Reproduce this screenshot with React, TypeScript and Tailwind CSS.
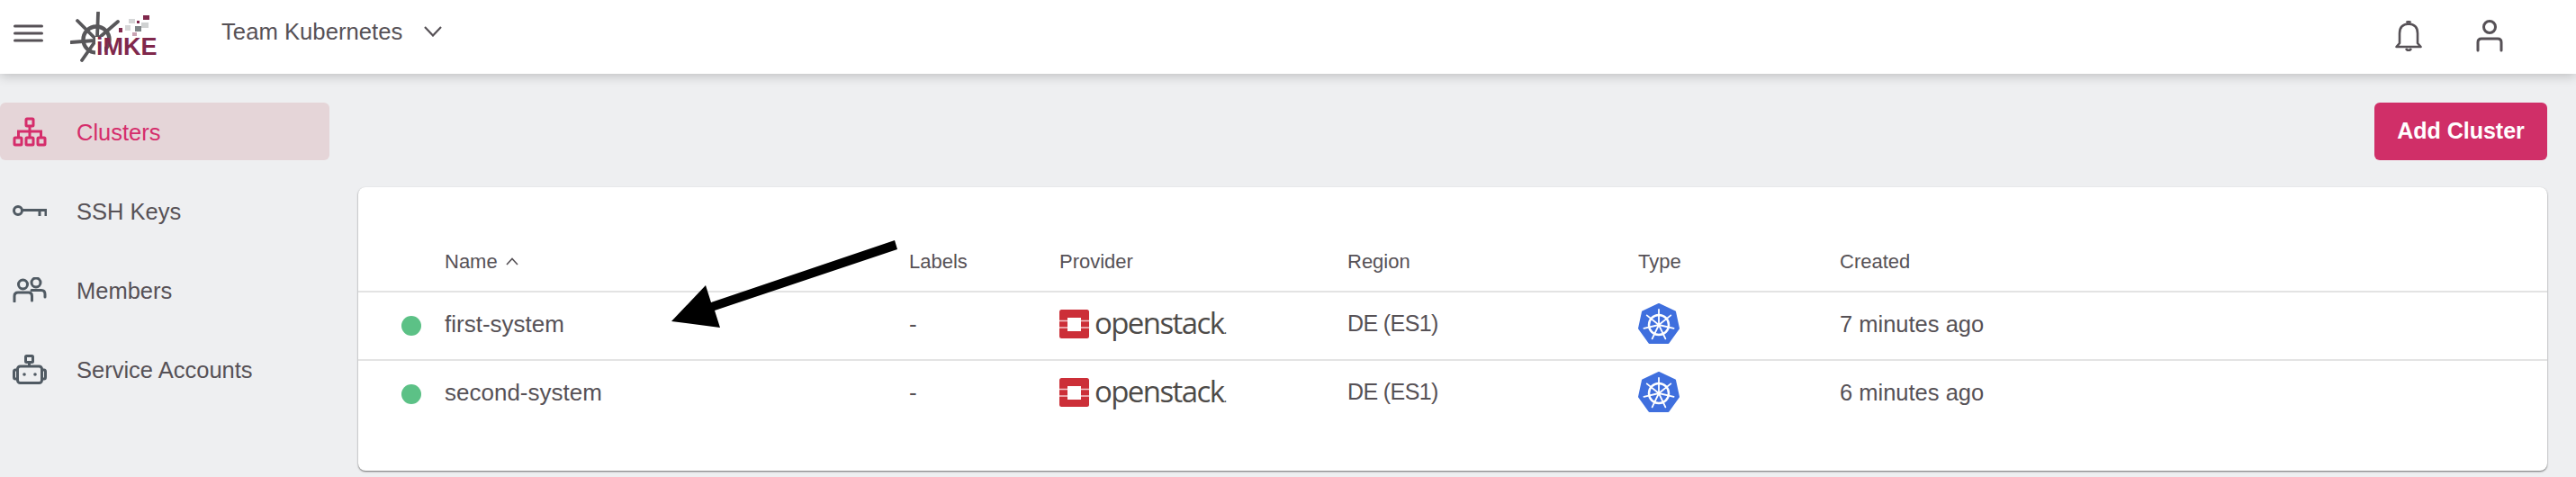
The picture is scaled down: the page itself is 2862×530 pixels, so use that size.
const rowGrid = "grid grid-cols-[96px_516px_167px_320px_323px_224px_1fr] items-center";

function Logo() {
    return (
        <div className="relative h-[56px] w-[96px] shrink-0">
            <svg width="96" height="56" viewBox="78 9 96 56" fill="none">
                <g stroke="#58575a" strokeLinecap="round">
                    <circle cx="107" cy="40" r="14.5" strokeWidth="4.4" />
                    <path d="M109 10 L108 38 M79 43 L105 41 M86 19 L105 38 M131 20 L110 38 M91 63 L105 43" strokeWidth="3.8" />
                </g>
                <rect x="106" y="37" width="10" height="23" fill="#fff" />
                <g>
                    <rect x="159" y="13" width="7" height="5" fill="#80284c" />
                    <rect x="143" y="17" width="7" height="5" fill="#d5d6d7" />
                    <rect x="152" y="19" width="3" height="3" fill="#80284c" />
                    <rect x="157" y="21" width="8" height="6" fill="#d0d2d2" />
                    <rect x="139" y="24" width="6" height="6" fill="#d5d6d7" />
                    <rect x="150" y="25" width="7" height="6" fill="#7f8587" />
                    <rect x="132" y="27" width="4" height="5" fill="#80284c" />
                    <rect x="147" y="32" width="5" height="4" fill="#c9a4b3" />
                </g>
            </svg>
            <span className="absolute left-[29px] top-[25px] text-[27px] font-bold leading-[28px] text-[#80284c]">iMKE</span>
        </div>
    );
}

function ClustersIcon() {
    return (
        <svg width="38" height="33" viewBox="0 0 38 33" fill="none" stroke="#d52d6b" strokeWidth="3">
            <rect x="15" y="2" width="8" height="8" rx="1" />
            <path d="M19 10 V22 M6.5 22 V16 H31.5 V22" />
            <rect x="2" y="23" width="8" height="8" rx="1" />
            <rect x="15" y="23" width="8" height="8" rx="1" />
            <rect x="28" y="23" width="8" height="8" rx="1" />
        </svg>
    );
}

function KeyIcon() {
    return (
        <svg width="38" height="14" viewBox="0 0 38 14" fill="none" stroke="#505a63" strokeWidth="3">
            <circle cx="6" cy="7" r="4.5" />
            <path d="M11 6.5 H37 V13 M30 6.5 V13" />
        </svg>
    );
}

function MembersIcon() {
    return (
        <svg width="38" height="28" viewBox="0 0 38 28" fill="none" stroke="#505a63" strokeWidth="3" strokeLinecap="round">
            <circle cx="11.5" cy="8" r="5" />
            <circle cx="26" cy="6" r="5" />
            <path d="M2 27 V21 Q2 17 6 17 H18 Q21.5 17 21.5 21 V26" />
            <path d="M21 14.5 H32 Q36 14.5 36 19 V22" />
        </svg>
    );
}

function RobotIcon() {
    return (
        <svg width="38" height="33" viewBox="0 0 38 33" fill="none" stroke="#505a63" strokeWidth="3">
            <rect x="14.5" y="1.5" width="8" height="7" rx="1" />
            <path d="M18.5 8.5 V13" />
            <rect x="5.5" y="13" width="27" height="18.5" rx="3" />
            <path d="M5.5 17 H3 Q1.5 17 1.5 19 V25 Q1.5 27 3 27 H5.5 M32.5 17 H35 Q36.5 17 36.5 19 V25 Q36.5 27 35 27 H32.5" />
            <circle cx="13" cy="22" r="1.8" fill="#505a63" stroke="none" />
            <circle cx="25" cy="22" r="1.8" fill="#505a63" stroke="none" />
        </svg>
    );
}

function OpenstackLogo() {
    return (
        <div className="flex items-center">
            <svg width="33" height="32" viewBox="0 0 33 32" className="shrink-0">
                <rect width="33" height="32" rx="2.5" fill="#cc2f38" />
                <rect x="9" y="9" width="15" height="15" fill="#fff" />
                <path d="M0 12.5 H9 M0 20 H9 M24 12.5 H33 M24 20 H33" stroke="#f3c9cc" strokeWidth="1.6" />
            </svg>
            <span className="ml-[6px] pb-[3px] font-['Open_Sans',sans-serif] text-[33px] font-medium leading-none tracking-[-1.6px] text-[#4d4a48]">
                openstack<span className="text-[14px]">.</span>
            </span>
        </div>
    );
}

function KubernetesIcon() {
    const spokes = [0, 1, 2, 3, 4, 5, 6].map((i) => (i * 360) / 7);
    return (
        <svg width="46" height="46" viewBox="0 0 46 46" className="shrink-0">
            <path fill="#3f6fde" stroke="#3f6fde" strokeWidth="2" strokeLinejoin="round" d="M23 1 L41 9.5 L45 28 L33.5 44 H12.5 L1 28 L5 9.5 Z" />
            <g fill="none" stroke="#fff">
                <circle cx="23" cy="24" r="11" strokeWidth="2.5" />
                <circle cx="23" cy="24" r="2" fill="#fff" stroke="none" />
                {spokes.map((deg) => (
                    <line key={deg} x1="23" y1="24" x2="23" y2="7" strokeWidth="1.8" strokeLinecap="round" transform={`rotate(${deg} 23 24)`} />
                ))}
            </g>
        </svg>
    );
}

const navItems = [
    { name: "Clusters", icon: <ClustersIcon />, active: true },
    { name: "SSH Keys", icon: <KeyIcon />, active: false },
    { name: "Members", icon: <MembersIcon />, active: false },
    { name: "Service Accounts", icon: <RobotIcon />, active: false },
];

const clusters = [
    { name: "first-system", created: "7 minutes ago" },
    { name: "second-system", created: "6 minutes ago" },
];

export default function App() {
    return (
        <div className="relative h-[530px] w-[2862px] overflow-hidden bg-[#eeeff1] font-['Liberation_Sans',sans-serif] text-[#565156]">
            <header className="relative z-10 flex h-[82px] items-center bg-white pl-[15px] pr-[81px] shadow-[0_2px_12px_rgba(0,0,0,0.22)]">
                <svg width="33" height="20" viewBox="0 0 33 20" fill="none" stroke="#565156" strokeWidth="3" strokeLinecap="round" className="mb-[8px] shrink-0">
                    <path d="M1.5 2 H31.5 M1.5 10 H31.5 M1.5 18 H31.5" />
                </svg>
                <div className="ml-[30px]">
                    <Logo />
                </div>
                <span className="ml-[72px] pb-[12px] text-[25.7px]">Team Kubernetes</span>
                <svg width="20" height="12" viewBox="0 0 20 12" fill="none" stroke="#565156" strokeWidth="2.2" className="mb-[12px] ml-[24px] shrink-0">
                    <path d="M1 1 L10 10.5 L19 1" />
                </svg>
                <div className="ml-auto flex items-center gap-[60px] pb-[3px]">
                    <svg width="30" height="34" viewBox="0 0 30 34" fill="none" stroke="#565156" strokeWidth="2.6" strokeLinejoin="round">
                        <path d="M1.5 29 L5 25 V14 Q5 4 15 3.5 Q25 4 25 14 V25 L28.5 29 Z" />
                        <path d="M12.5 2 Q15 0.5 17.5 2 M12 31 Q15 35 18 31" />
                    </svg>
                    <svg width="30" height="38" viewBox="0 0 30 38" fill="none" stroke="#565156" strokeWidth="3" strokeLinecap="round">
                        <circle cx="15" cy="9" r="6.5" />
                        <path d="M2 35 V26 Q2 22 6 22 H24 Q28 22 28 26 V35" />
                    </svg>
                </div>
            </header>
            <div className="flex">
                <nav className="flex w-[366px] shrink-0 flex-col gap-[24px] pt-[32px]">
                    {navItems.map((item) => (
                        <div
                            key={item.name}
                            className={`flex h-[64px] items-center rounded-md pl-[14px] text-[25.5px] ${item.active ? "bg-[#e5d5d8] text-[#d52d6b]" : ""}`}
                        >
                            <div className="flex w-[71px] shrink-0 items-center">{item.icon}</div>
                            <span className="pt-[2px]">{item.name}</span>
                        </div>
                    ))}
                </nav>
                <main className="min-w-0 flex-1 pl-[32px] pr-[32px] pt-[32px]">
                    <div className="flex justify-end">
                        <button
                            type="button"
                            className="h-[64px] w-[192px] rounded-md bg-[#d02f68] text-[25px] font-bold text-white"
                        >
                            Add Cluster
                        </button>
                    </div>
                    <section className="mt-[30px] h-[315px] rounded-lg bg-white shadow-[0_1px_2px_rgba(0,0,0,0.55)]">
                        <div className={`${rowGrid} h-[115px] pt-[50px] text-[22px]`}>
                            <div />
                            <div className="flex items-center gap-[9px]">
                                Name
                                <svg width="14" height="9" viewBox="0 0 14 9" fill="none" stroke="#565156" strokeWidth="1.6">
                                    <path d="M1 8 L7 1.5 L13 8" />
                                </svg>
                            </div>
                            <div>Labels</div>
                            <div>Provider</div>
                            <div>Region</div>
                            <div>Type</div>
                            <div>Created</div>
                        </div>
                        {clusters.map((cluster) => (
                            <div key={cluster.name} className={`${rowGrid} h-[76px] border-t-2 border-[#e3e3e3] pb-[4px] text-[26px]`}>
                                <div className="pl-[48px] pt-[4px]">
                                    <div className="size-[22px] rounded-full bg-[#5cc186]" />
                                </div>
                                <div>{cluster.name}</div>
                                <div>-</div>
                                <div>
                                    <OpenstackLogo />
                                </div>
                                <div className="text-[25px] tracking-[-0.6px]">DE (ES1)</div>
                                <div>
                                    <KubernetesIcon />
                                </div>
                                <div className="text-[25.5px]">{cluster.created}</div>
                            </div>
                        ))}
                    </section>
                </main>
            </div>
            <svg width="260" height="110" viewBox="740 260 260 110" className="absolute left-[740px] top-[260px] z-20">
                <polygon fill="#000" points="994,267 997,277 794,345 800,364 746,357 784,317 790,336" />
            </svg>
        </div>
    );
}
